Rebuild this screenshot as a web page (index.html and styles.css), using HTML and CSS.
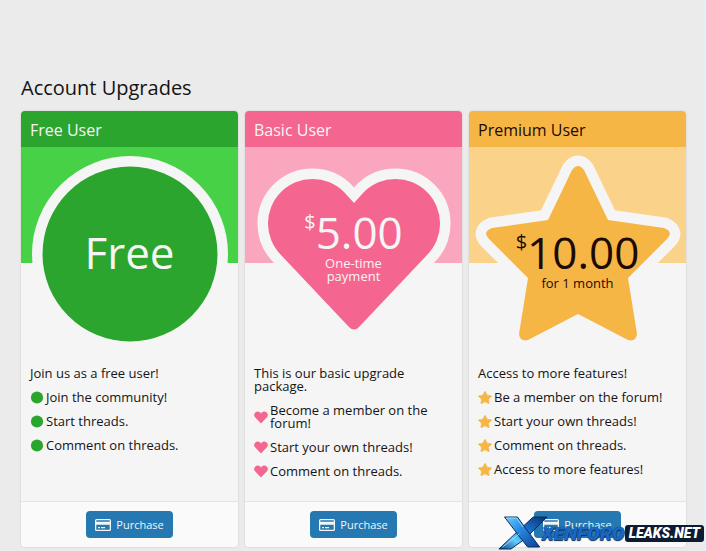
FILE: index.html
```html
<!DOCTYPE html>
<html lang="en">
  <head>
    <meta charset="utf-8">
    <title>Account Upgrades</title>
    <link rel="stylesheet" href="styles.css">
  </head>
  <body>
    <!-- Shared icons -->
    <svg class="sprite" aria-hidden="true">
      <symbol id="icon-circle" viewBox="0 0 16 16">
        <circle cx="8" cy="8" r="7.5" />
      </symbol>
      <symbol id="icon-heart" viewBox="18 26 180 164">
        <path d="M108 56L98 45A44.5 44.5 0 0 0 35 108L103 180Q108 185 113 180L181 108A44.5 44.5 0 0 0 118 45Z" />
      </symbol>
      <symbol id="icon-star" viewBox="14 14 188 184">
        <path stroke="var(--main)" stroke-width="8" stroke-linejoin="round" d="M102 23Q108 15 114 23L138 73L194 81Q204 85 197 92L158 131L167 187Q166 195 158 193L108 167L58 193Q50 195 49 187L58 131L19 92Q12 85 22 81L78 73Z" />
      </symbol>
      <symbol id="icon-card" viewBox="0 0 16 12">
        <path fill-rule="evenodd" d="M1.5 0h13A1.5 1.5 0 0 1 16 1.5v9a1.5 1.5 0 0 1-1.5 1.5h-13A1.5 1.5 0 0 1 0 10.5v-9A1.5 1.5 0 0 1 1.5 0zM1.3 1.3v1.4h13.4V1.3zM1.3 5.7v5h13.4v-5zM3 8h2v1.3H3zM6 8h4v1.3H6z" />
      </symbol>
    </svg>

    <main class="page">
      <h1>Account Upgrades</h1>

      <div class="upgrades">
        <section class="card card-free">
          <h2>Free User</h2>
          <div class="hero">
            <svg class="shape" viewBox="0 0 216 210" aria-hidden="true">
              <circle cx="108" cy="107" r="87.5" />
            </svg>
            <div class="price">
              <div class="amount">Free</div>
            </div>
          </div>
          <div class="details">
            <p>Join us as a free user!</p>
            <ul>
              <li><svg><use href="#icon-circle" /></svg><span>Join the community!</span></li>
              <li><svg><use href="#icon-circle" /></svg><span>Start threads.</span></li>
              <li><svg><use href="#icon-circle" /></svg><span>Comment on threads.</span></li>
            </ul>
          </div>
          <div class="footer">
            <button type="button"><svg><use href="#icon-card" /></svg>Purchase</button>
          </div>
        </section>

        <section class="card card-basic">
          <h2>Basic User</h2>
          <div class="hero">
            <svg class="shape" viewBox="0 0 216 210" aria-hidden="true">
              <path d="M108 56L98 45A44.5 44.5 0 0 0 35 108L103 180Q108 185 113 180L181 108A44.5 44.5 0 0 0 118 45Z" />
            </svg>
            <div class="price">
              <div class="amount"><sup>$</sup>5.00</div>
              <div class="term">One-time payment</div>
            </div>
          </div>
          <div class="details">
            <p>This is our basic upgrade package.</p>
            <ul>
              <li><svg><use href="#icon-heart" /></svg><span>Become a member on the forum!</span></li>
              <li><svg><use href="#icon-heart" /></svg><span>Start your own threads!</span></li>
              <li><svg><use href="#icon-heart" /></svg><span>Comment on threads.</span></li>
            </ul>
          </div>
          <div class="footer">
            <button type="button"><svg><use href="#icon-card" /></svg>Purchase</button>
          </div>
        </section>

        <section class="card card-premium">
          <h2>Premium User</h2>
          <div class="hero">
            <svg class="shape" viewBox="0 0 216 210" aria-hidden="true">
              <path d="M102 23Q108 15 114 23L138 73L194 81Q204 85 197 92L158 131L167 187Q166 195 158 193L108 167L58 193Q50 195 49 187L58 131L19 92Q12 85 22 81L78 73Z" />
            </svg>
            <div class="price">
              <div class="amount"><sup>$</sup>10.00</div>
              <div class="term">for 1 month</div>
            </div>
          </div>
          <div class="details">
            <p>Access to more features!</p>
            <ul>
              <li><svg><use href="#icon-star" /></svg><span>Be a member on the forum!</span></li>
              <li><svg><use href="#icon-star" /></svg><span>Start your own threads!</span></li>
              <li><svg><use href="#icon-star" /></svg><span>Comment on threads.</span></li>
              <li><svg><use href="#icon-star" /></svg><span>Access to more features!</span></li>
            </ul>
          </div>
          <div class="footer">
            <button type="button"><svg><use href="#icon-card" /></svg>Purchase</button>
          </div>
        </section>
      </div>
    </main>

    <!-- Site watermark -->
    <div class="watermark">
      <svg viewBox="0 0 54 36" preserveAspectRatio="none" aria-hidden="true">
        <defs>
          <linearGradient id="blade" x1="0" y1="0" x2="1" y2="1">
            <stop offset="0" stop-color="#6fd0ff" />
            <stop offset="0.4" stop-color="#2a8de6" />
            <stop offset="1" stop-color="#0d3f96" />
          </linearGradient>
          <linearGradient id="slash" x1="1" y1="0" x2="0" y2="1">
            <stop offset="0" stop-color="#0c2f66" />
            <stop offset="0.4" stop-color="#1c6fd0" />
            <stop offset="0.7" stop-color="#65ceff" />
            <stop offset="1" stop-color="#0d3f85" />
          </linearGradient>
        </defs>
        <path fill="url(#slash)" stroke="#0a2856" d="M53 2H38L17 20 1 34h13l15-10z" />
        <path fill="url(#blade)" stroke="#0a2856" d="M7 2h14l7 9 17 21H32L21 19z" />
        <path fill="none" stroke="#8fdcff" d="M9 3h11l7 9M5 32l18-13" />
      </svg>
      <span class="mark-blue">XENFORO</span><span class="mark-dark">LEAKS.NET</span>
    </div>
  </body>
</html>
```

FILE: styles.css
```css
body {
  position: relative;
  box-sizing: border-box;
  min-height: 100vh;
  margin: 0;
  background-color: #ebebeb;
  border-right: 2px solid #e0f2f5;
  color: #141414;
  font-family: "Open Sans", "Noto Sans", sans-serif;
  font-size: 13px;
  line-height: 13px;
}

.sprite {
  position: absolute;
  width: 0;
  height: 0;
}

.page {
  padding: 76px 18px 3px 21px;
}

h1 {
  margin: 0 0 11px;
  font-size: 20px;
  font-weight: 500;
  line-height: 24px;
}

.upgrades {
  display: grid;
  grid-template-columns: repeat(3, 1fr);
  gap: 7px;
}

.card {
  display: flex;
  flex-direction: column;
  box-sizing: border-box;
  background-color: #f5f5f5;
  border-radius: 4px;
  box-shadow: 0 0 2px #c4c4c4;
  overflow: hidden;
}

.card-free {
  --main: #2ba52e;
  --light: #47d147;
  --text: #f5f5f5;
  --price-top: 80px;
}

.card-basic {
  --main: #f4658f;
  --light: #f9a6be;
  --text: #f5f5f5;
  --price-top: 60px;
}

.card-premium {
  --main: #f6b646;
  --light: #fad289;
  --text: #1e0a05;
  --price-top: 80px;
}

h2 {
  margin: 0;
  padding: 9px 9px 7px;
  background-color: var(--main);
  color: var(--text);
  font-size: 16px;
  font-weight: 500;
  line-height: 20px;
}

.hero {
  display: grid;
  justify-items: center;
  align-items: start;
  height: 210px;
  background: linear-gradient(var(--light) 116px, #f5f5f5 116px);
}

.hero > * {
  grid-area: 1 / 1;
}

.shape {
  width: 216px;
  height: 210px;
  fill: var(--main);
  stroke: #f5f5f5;
  stroke-width: 21px;
  stroke-linejoin: round;
  paint-order: stroke;
}

.price {
  padding-top: var(--price-top);
  color: var(--text);
  text-align: center;
}

.amount {
  font-size: 44px;
  font-weight: 500;
  line-height: 50px;
}

.amount sup {
  font-size: 20px;
  line-height: 0;
  vertical-align: 20px;
}

.term {
  width: 80px;
  margin: 0 auto;
}

.details {
  flex: 1;
  padding: 10px 9px 23px;
}

.details p {
  margin: 0 0 11px;
}

.details ul {
  display: grid;
  gap: 11px;
  margin: 0;
  padding: 0;
  list-style: none;
}

.details li {
  display: flex;
  align-items: center;
  gap: 2px;
}

.details li svg {
  flex: none;
  width: 14px;
  height: 13px;
  fill: var(--main);
}

.footer {
  padding: 9px;
  background-color: #fafafa;
  border-top: 1px solid #e4e4e4;
  text-align: center;
}

button {
  display: inline-flex;
  align-items: center;
  gap: 5px;
  height: 27px;
  padding: 0 9px;
  background-color: #2578b1;
  border: none;
  border-radius: 4px;
  color: #f5f5f5;
  font: inherit;
  font-size: 11px;
  font-weight: 500;
  vertical-align: top;
  cursor: pointer;
}

button svg {
  width: 16px;
  height: 12px;
  fill: currentColor;
}

.watermark {
  position: absolute;
  right: 0;
  bottom: 0;
  display: flex;
  align-items: center;
  font-family: Roboto, "Liberation Sans", sans-serif;
  font-size: 19px;
  font-style: italic;
  font-weight: 900;
  line-height: 17px;
}

.watermark svg {
  width: 50px;
  height: 36px;
  margin-right: -6px;
}

.mark-blue {
  color: #1968c8;
  text-shadow: 0 0 1px #0a2856, 0 1px 1px #0a2856;
}

.mark-dark {
  padding: 0 4px;
  background-color: #0c1c33;
  border-radius: 3px;
  color: #fff;
  font-size: 14px;
}
```
